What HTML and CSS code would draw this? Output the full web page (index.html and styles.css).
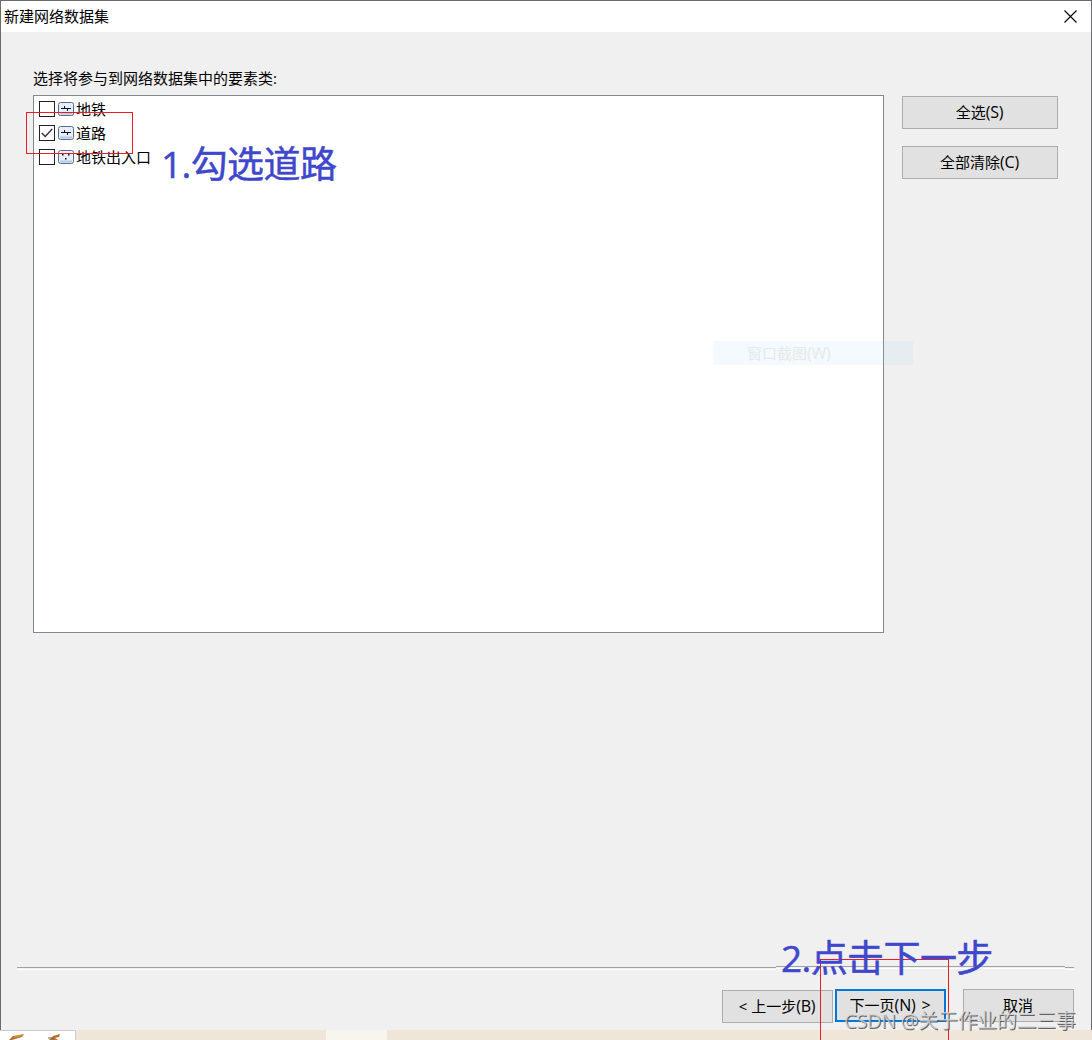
FILE: index.html
```html
<!DOCTYPE html>
<html lang="zh-CN">
<head>
    <meta charset="UTF-8">
    <meta name="viewport" content="width=device-width, initial-scale=1.0">
    <title>新建网络数据集</title>
    <link rel="stylesheet" href="styles.css">
</head>
<body>
    <!-- Dialog window -->
    <div class="window">
        <header class="title-bar">
            <span class="title">新建网络数据集</span>
            <svg class="close-icon" width="13" height="13" viewBox="0 0 13 13">
                <path d="M0.5 0.5L12.5 12.5M12.5 0.5L0.5 12.5" stroke="#000" stroke-width="1.1" fill="none"/>
            </svg>
        </header>

        <main class="content">
            <p class="prompt">选择将参与到网络数据集中的要素类:</p>
            <div class="chooser">
                <ul class="class-list">
                    <li class="class-item">
                        <span class="checkbox"></span>
                        <svg class="class-icon" width="16" height="14" viewBox="0 0 16 14">
                            <rect x="0.5" y="0.5" width="15" height="13" rx="2" fill="#e6eff9" stroke="#566f90"/>
                            <path d="M2 11.5H14" stroke="#b5c8e2" stroke-width="2"/>
                            <path d="M3 6.5H13M6.5 4V7M9.5 6V9" stroke="#111"/>
                        </svg>
                        <span class="class-name">地铁</span>
                    </li>
                    <li class="class-item">
                        <span class="checkbox">
                            <svg width="14" height="14" viewBox="0 0 14 14">
                                <path d="M1.8 7L5.2 10.5L12.2 3" stroke="#333" stroke-width="1.4" fill="none"/>
                            </svg>
                        </span>
                        <svg class="class-icon" width="16" height="14" viewBox="0 0 16 14">
                            <rect x="0.5" y="0.5" width="15" height="13" rx="2" fill="#e6eff9" stroke="#566f90"/>
                            <path d="M2 11.5H14" stroke="#b5c8e2" stroke-width="2"/>
                            <path d="M3 6.5H13M6.5 4V7M9.5 6V9" stroke="#111"/>
                        </svg>
                        <span class="class-name">道路</span>
                    </li>
                    <li class="class-item">
                        <span class="checkbox"></span>
                        <svg class="class-icon" width="16" height="14" viewBox="0 0 16 14">
                            <rect x="0.5" y="0.5" width="15" height="13" rx="2" fill="#e6eff9" stroke="#566f90"/>
                            <path d="M2 11.5H14" stroke="#b5c8e2" stroke-width="2"/>
                            <path d="M4 4h1.5v1.5h-1.5zM10 4h1.5v1.5h-1.5zM7 8h1.5v1.5h-1.5z" fill="#111"/>
                        </svg>
                        <span class="class-name">地铁出入口</span>
                    </li>
                </ul>
                <div class="side-buttons">
                    <button class="btn">全选<span class="key">(S)</span></button>
                    <button class="btn">全部清除<span class="key">(C)</span></button>
                </div>
            </div>
        </main>

        <footer class="footer">
            <div class="separator">
                <span class="line line-left"></span>
                <span class="line line-mid"></span>
                <span class="line line-right"></span>
            </div>
            <div class="nav-buttons">
                <button class="btn btn-back">&lt; 上一步<span class="key">(B)</span></button>
                <button class="btn btn-next">下一页<span class="key">(N) &gt;</span></button>
                <button class="btn btn-cancel">取消</button>
            </div>
        </footer>
    </div>

    <!-- Desktop strip below the window -->
    <div class="desktop">
        <div class="thumb">
            <svg width="75" height="9" viewBox="0 0 75 9">
                <path d="M9 9L13 5L24 3L22 6L15 8L12 9Z" fill="#b8702c"/>
                <path d="M14 6L23 4" stroke="#e0a04c"/>
                <path d="M49 9L53 5L60 3L59 6L55 7L58 9Z" fill="#b8702c"/>
                <path d="M48 7L54 7" stroke="#7c6657"/>
            </svg>
        </div>
        <div class="light-patch"></div>
    </div>

    <!-- Fading menu item -->
    <div class="ghost-menu">窗口截图<span class="key">(W)</span></div>

    <!-- Step marks -->
    <div class="frame frame-road"></div>
    <div class="frame frame-next"></div>
    <div class="note note-one">1.勾选道路</div>
    <div class="note note-two">2.点击下一步</div>
    <div class="watermark">CSDN @关于作业的二三事</div>
</body>
</html>
```
FILE: styles.css
```css
* {
    margin: 0;
    padding: 0;
    box-sizing: border-box;
}

body {
    position: relative;
    width: 1092px;
    height: 1040px;
    overflow: hidden;
    font-family: "Open Sans", "Noto Sans CJK SC", sans-serif;
    font-size: 15px;
    line-height: 20px;
    color: #000;
    background: #efe6d9;
}

/* Window */
.window {
    display: flex;
    flex-direction: column;
    height: 1030px;
    border: 1px solid #6b6b6d;
    border-bottom: none;
    background: #f0f0f0;
}

.title-bar {
    display: flex;
    justify-content: space-between;
    align-items: center;
    height: 31px;
    padding: 0 14px 0 3px;
    background: #fff;
}

.title {
    padding-bottom: 2px;
}

.content {
    flex: 1;
    padding: 36px 33px 0 32px;
}

.prompt {
    height: 27px;
}

.chooser {
    display: flex;
    justify-content: space-between;
}

.class-list {
    width: 851px;
    height: 538px;
    padding: 1px 5px;
    border: 1px solid #828790;
    background: #fff;
    list-style: none;
}

.class-item {
    display: flex;
    align-items: center;
    height: 24px;
}

.checkbox {
    display: flex;
    width: 16px;
    height: 16px;
    margin-right: 3px;
    border: 1px solid #222;
    background: #fff;
}

.class-icon {
    margin-right: 2px;
}

.side-buttons {
    display: flex;
    flex-direction: column;
    gap: 17px;
    padding-top: 1px;
    width: 156px;
}

/* Buttons */
.btn {
    height: 33px;
    padding: 0 1px 2px 0;
    border: 1px solid #adadad;
    background: #e1e1e1;
    color: #000;
    font: inherit;
    white-space: pre;
}

.key {
    font-size: 16px;
    letter-spacing: -0.2px;
}

/* Footer */
.footer {
    height: 64px;
    padding: 0 17px 0 16px;
}

.separator {
    display: flex;
}

.line {
    height: 3px;
    border-top: 1px solid #a0a0a0;
    border-bottom: 1px solid #fff;
}

.line-left {
    width: 759px;
    margin-top: 1px;
}

.line-mid {
    width: 289px;
}

.line-right {
    width: 9px;
    margin-top: 1px;
}

.nav-buttons {
    display: flex;
    justify-content: flex-end;
    padding-top: 19px;
}

.nav-buttons .btn {
    width: 111px;
}

.nav-buttons .btn-back {
    margin: 1px 2px 0 0;
}

.nav-buttons .btn-next {
    margin-right: 17px;
    border: 2px solid #0078d7;
}

.btn-next .key {
    word-spacing: 2px;
}

/* Desktop strip */
.desktop {
    display: flex;
    height: 10px;
    background: #efe6d9;
}

.thumb {
    width: 76px;
    margin-right: 250px;
    border-top: 1px solid #ccc;
    border-right: 1px solid #ccc;
    background: #fff;
}

.thumb svg {
    display: block;
}

.light-patch {
    width: 61px;
    background: #f8f4ee;
}

/* Overlays */
.ghost-menu {
    position: absolute;
    left: 713px;
    top: 341px;
    width: 200px;
    height: 24px;
    padding-left: 34px;
    line-height: 24px;
    color: #e7e9ea;
    background: rgba(145, 205, 240, 0.1);
}

.frame {
    position: absolute;
    border: 1px solid #ed1c24;
}

.frame-road {
    left: 26px;
    top: 112px;
    width: 107px;
    height: 42px;
}

.frame-next {
    left: 820px;
    top: 959px;
    width: 129px;
    height: 90px;
}

.note {
    position: absolute;
    font-size: 37px;
    line-height: 48px;
    letter-spacing: -0.6px;
    color: #3f48cc;
    -webkit-text-stroke: 0.5px #3f48cc;
    white-space: nowrap;
}

.note-one {
    left: 161px;
    top: 140px;
}

.note-two {
    left: 781px;
    top: 934px;
}

.watermark {
    position: absolute;
    left: 844px;
    top: 1008px;
    font-size: 20px;
    line-height: 26px;
    letter-spacing: -0.35px;
    color: rgba(215, 215, 215, 0.8);
    text-shadow: 1px 1px 0 rgba(75, 75, 75, 0.85);
    white-space: nowrap;
}
```
